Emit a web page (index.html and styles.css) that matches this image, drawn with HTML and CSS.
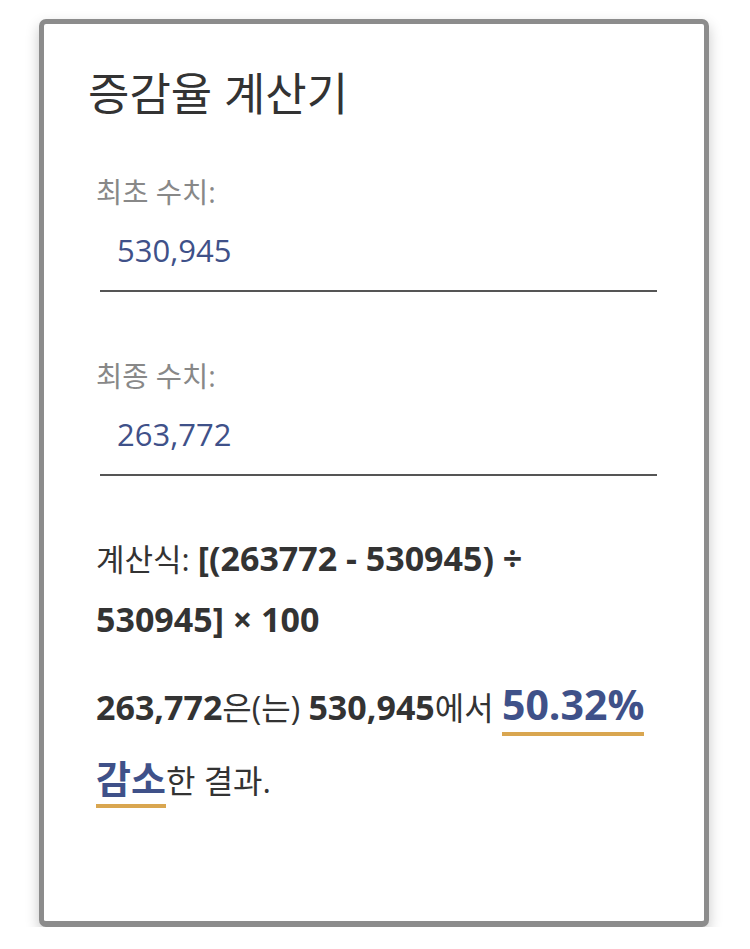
FILE: index.html
```html
<!DOCTYPE html>
<html>

<head>
    <meta charset="utf-8">
    <link rel="stylesheet" href="styles.css">
</head>

<body>
    <div class="Calc">
        <h2 class="Title">증감율 계산기</h2>
        <div class="Field">
            <label for="start">최초 수치:</label>
            <input type="text" id="start" value="530,945">
        </div>
        <div class="Field">
            <label for="end">최종 수치:</label>
            <input type="text" id="end" value="263,772">
        </div>
        <p class="Formula">계산식: <b>[(263772 - 530945) ÷ 530945] × 100</b></p>
        <p class="Result"><b>263,772</b>은(는) <b>530,945</b>에서 <span class="Mark">50.32%</span> <span class="Mark Word">감소</span>한 결과.</p>
    </div>
</body>

</html>
```

FILE: styles.css
```css
body {
    margin: 0;
    background-color: white;
    font-family: "Open Sans", "Noto Sans CJK KR", sans-serif;
    color: #333;
}

.Calc {
    box-sizing: border-box;
    width: 670px;
    height: 908px;
    margin: 19px 0 0 39px;
    padding: 0 47px 0 44px;
    border: 5px solid #8c8c8c;
    border-bottom-width: 6px;
    border-radius: 7px;
    background-color: white;
    box-shadow: 0 6px 14px rgba(0, 0, 0, 0.22);
}

.Title {
    margin: 0;
    padding-top: 40px;
    font-size: 45px;
    font-weight: normal;
    line-height: 60px;
    color: #333;
}

.Field {
    display: flex;
    flex-direction: column;
    margin-top: 48px;
}

.Field + .Field {
    margin-top: 64px;
}

.Field label {
    margin-left: 8px;
    font-size: 28.5px;
    line-height: 40px;
    color: #888;
}

.Field input {
    height: 40px;
    margin: 18px 0 0 12px;
    padding: 0 0 20px 17px;
    border: none;
    border-bottom: 2px solid #555;
    outline: none;
    font-family: inherit;
    font-size: 31px;
    line-height: 40px;
    color: #3f5189;
}

.Formula {
    margin: 52px 0 0 8px;
    font-size: 31px;
    line-height: 60px;
}

.Formula b {
    font-size: 34px;
}

.Result {
    margin: 19px 0 0 8px;
    font-size: 32px;
    line-height: 70px;
    word-break: keep-all;
}

.Result b {
    font-size: 34px;
}

.Result .Mark {
    font-size: 41px;
    font-weight: bold;
    color: #3f5189;
    border-bottom: 4px solid #d9a650;
}

.Result .Word {
    font-size: 38px;
}
```
